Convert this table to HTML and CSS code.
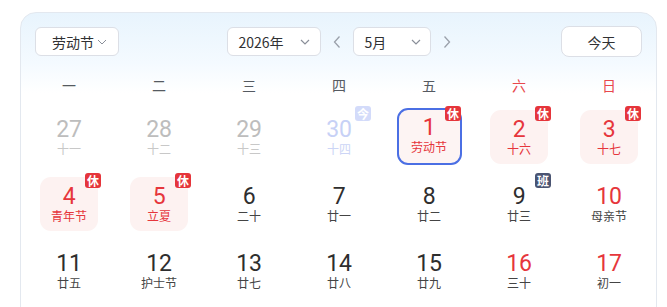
FILE: index.html
```html
<!DOCTYPE html>
<html lang="zh-CN">
<head>
<meta charset="utf-8">
<title>日历</title>
<link rel="stylesheet" href="styles.css">
</head>
<body>
<div class="card">
  <div class="header">
    <div class="h-left">
      <div class="select sel-holiday"><span>劳动节</span><svg class="chev" viewBox="0 0 10 6" width="10" height="6"><path d="M1 1l4 4 4-4" fill="none" stroke="#8a8f99" stroke-width="1"/></svg></div>
    </div>
    <div class="h-center">
      <div class="select sel-year"><span>2026年</span><svg class="chev" viewBox="0 0 10 6" width="10" height="6"><path d="M1 1l4 4 4-4" fill="none" stroke="#8a8f99" stroke-width="1.2"/></svg></div>
      <svg class="nav" viewBox="0 0 8 14" width="8" height="14"><path d="M6.5 1.5L1.5 7l5 5.5" fill="none" stroke="#9aa0aa" stroke-width="1.3"/></svg>
      <div class="select sel-month"><span>5月</span><svg class="chev" viewBox="0 0 10 6" width="10" height="6"><path d="M1 1l4 4 4-4" fill="none" stroke="#8a8f99" stroke-width="1.2"/></svg></div>
      <svg class="nav nav-next" viewBox="0 0 8 14" width="8" height="14"><path d="M1.5 1.5L6.5 7l-5 5.5" fill="none" stroke="#9aa0aa" stroke-width="1.3"/></svg>
    </div>
    <div class="h-right">
      <button class="today-btn">今天</button>
    </div>
  </div>

  <div class="weekdays">
    <div>一</div><div>二</div><div>三</div><div>四</div><div>五</div><div class="wk-red">六</div><div class="wk-red">日</div>
  </div>

  <div class="grid">
    <div class="cell"><div class="day other"><span class="num">27</span><span class="lunar">十一</span></div></div>
    <div class="cell"><div class="day other"><span class="num">28</span><span class="lunar">十二</span></div></div>
    <div class="cell"><div class="day other"><span class="num">29</span><span class="lunar">十三</span></div></div>
    <div class="cell"><div class="day other-today"><span class="num">30</span><span class="lunar">十四</span></div><span class="badge today">今</span></div>
    <div class="cell"><div class="day rest selected"><span class="num">1</span><span class="lunar">劳动节</span></div><span class="badge off">休</span></div>
    <div class="cell"><div class="day rest"><span class="num">2</span><span class="lunar">十六</span></div><span class="badge off">休</span></div>
    <div class="cell"><div class="day rest"><span class="num">3</span><span class="lunar">十七</span></div><span class="badge off">休</span></div>

    <div class="cell"><div class="day rest"><span class="num">4</span><span class="lunar">青年节</span></div><span class="badge off">休</span></div>
    <div class="cell"><div class="day rest"><span class="num">5</span><span class="lunar">立夏</span></div><span class="badge off">休</span></div>
    <div class="cell"><div class="day"><span class="num">6</span><span class="lunar">二十</span></div></div>
    <div class="cell"><div class="day"><span class="num">7</span><span class="lunar">廿一</span></div></div>
    <div class="cell"><div class="day"><span class="num">8</span><span class="lunar">廿二</span></div></div>
    <div class="cell"><div class="day"><span class="num">9</span><span class="lunar">廿三</span></div><span class="badge work">班</span></div>
    <div class="cell"><div class="day weekend"><span class="num">10</span><span class="lunar">母亲节</span></div></div>

    <div class="cell"><div class="day"><span class="num">11</span><span class="lunar">廿五</span></div></div>
    <div class="cell"><div class="day"><span class="num">12</span><span class="lunar">护士节</span></div></div>
    <div class="cell"><div class="day"><span class="num">13</span><span class="lunar">廿七</span></div></div>
    <div class="cell"><div class="day"><span class="num">14</span><span class="lunar">廿八</span></div></div>
    <div class="cell"><div class="day"><span class="num">15</span><span class="lunar">廿九</span></div></div>
    <div class="cell"><div class="day weekend"><span class="num">16</span><span class="lunar">三十</span></div></div>
    <div class="cell"><div class="day weekend"><span class="num">17</span><span class="lunar">初一</span></div></div>
  </div>
</div>
</body>
</html>
```

FILE: styles.css
```css
* { box-sizing: border-box; }

html, body {
  margin: 0;
  padding: 0;
  background: #ffffff;
  overflow: hidden;
}

body {
  width: 667px;
  height: 307px;
  font-family: "Noto Sans CJK SC", "Noto Sans", sans-serif;
  color: #333333;
}

.card {
  margin: 12px 0 0 20px;
  width: 637px;
  height: 340px;
  border: 1px solid #e3e8ef;
  border-radius: 16px;
  background: linear-gradient(180deg, #e8f4fd 0px, #f4faff 50px, #ffffff 80px);
}

.header {
  display: grid;
  grid-template-columns: 1fr auto 1fr;
  align-items: center;
  padding: 13px 14px 0 14px;
  height: 44px;
}

.h-left { display: flex; justify-content: flex-start; }
.h-right { display: flex; justify-content: flex-end; }
.h-center { display: flex; align-items: center; }

.select {
  display: flex;
  align-items: center;
  justify-content: space-between;
  height: 29px;
  background: #ffffff;
  border: 1px solid #dcdfe6;
  border-radius: 6px;
  font-size: 14px;
  color: #303133;
  line-height: 1;
}

.sel-holiday { width: 84px; padding: 0 11px 0 16px; }
.sel-year { width: 94px; padding: 0 10px 0 11px; flex: none; }
.sel-month { width: 78px; padding: 0 9px 0 11px; flex: none; }

.chev { display: block; }

.nav { display: block; flex: none; margin: 0 12px 0 12px; }
.nav-next { margin-right: 0; }

.today-btn {
  width: 81px;
  height: 31px;
  background: #ffffff;
  border: 1px solid #dcdfe6;
  border-radius: 8px;
  font-family: "Noto Sans CJK SC", sans-serif;
  font-size: 14px;
  color: #303133;
  padding: 0;
}

.weekdays {
  display: grid;
  grid-template-columns: repeat(7, 90px);
  padding: 0 2px 0 3px;
  margin-top: 10px;
  height: 36px;
  align-items: center;
  font-size: 14px;
  color: #555a61;
}

.weekdays div { text-align: center; }
.weekdays .wk-red { color: #e8474c; }

.grid {
  display: grid;
  grid-template-columns: repeat(7, 90px);
  grid-auto-rows: 67px;
  padding: 0 2px 0 3px;
}

.cell {
  position: relative;
  display: flex;
  align-items: center;
  justify-content: center;
}

.day {
  width: 58px;
  height: 54px;
  border-radius: 11px;
  display: flex;
  flex-direction: column;
  align-items: center;
  padding-top: 7px;
  color: #2e2e2e;
}

.num {
  font-family: Roboto, "Liberation Sans", sans-serif;
  font-size: 23px;
  line-height: 25px;
  letter-spacing: -0.3px;
}

.lunar {
  font-size: 12px;
  line-height: 14px;
  color: #444;
}

.day.other { color: #bdbdbd; }
.day.other .lunar { color: #c8c8c8; }

.day.other-today { color: #c7d1f6; }
.day.other-today .lunar { color: #ccd5f6; }

.day.rest {
  background: #fdf2f1;
  color: #e6363c;
}
.day.rest .lunar { color: #e6363c; }

.day.selected {
  width: 65px;
  height: 57px;
  border: 2px solid #4b6fe4;
  border-radius: 11px;
  padding-top: 5px;
  background: #fdf4f3;
}

.day.weekend { color: #e6363c; }
.day.weekend .lunar { color: #444; }

.badge {
  position: absolute;
  top: 3px;
  left: 61px;
  width: 16px;
  height: 15px;
  border-radius: 3px;
  color: #ffffff;
  font-size: 12px;
  font-weight: 700;
  line-height: 15px;
  text-align: center;
}

.badge.off { background: #e5353b; }
.badge.work { background: #4a5472; }
.badge.today { background: #d3dbfa; }
```
